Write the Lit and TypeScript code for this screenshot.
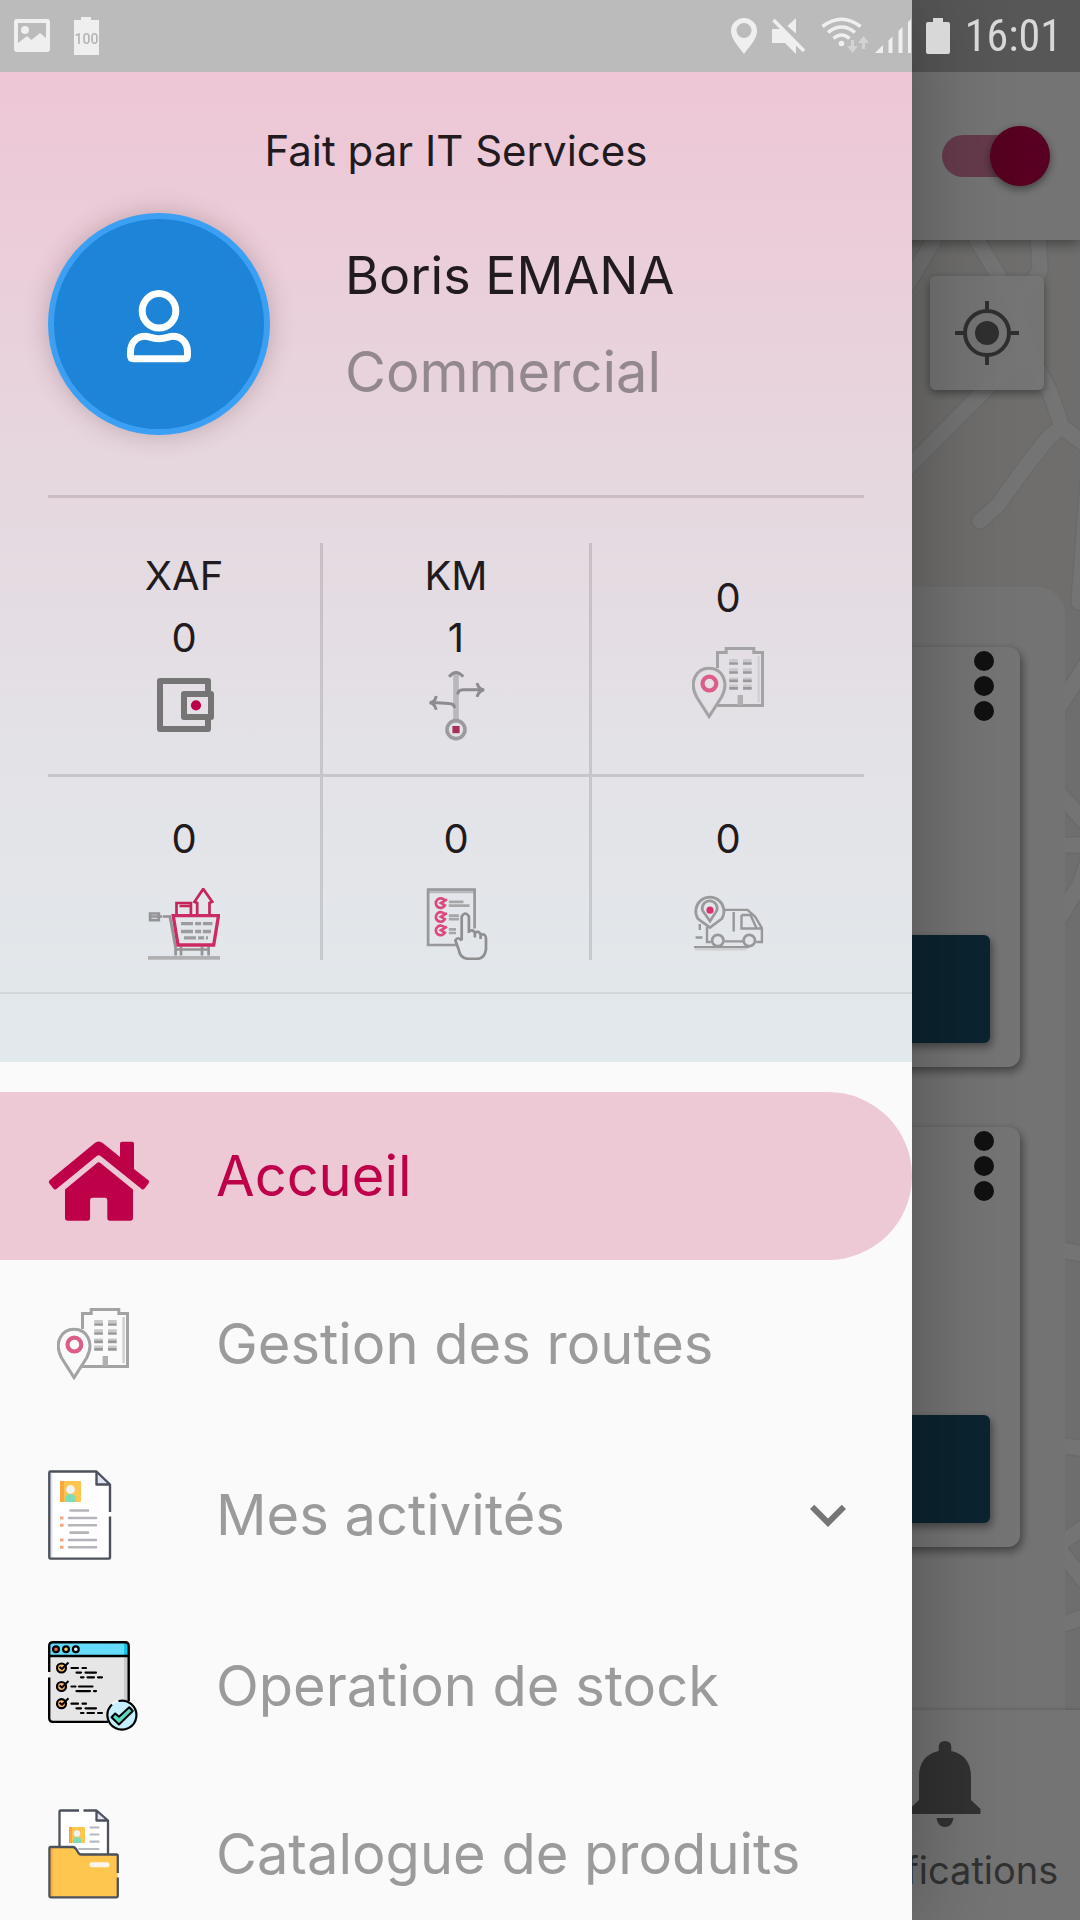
import { LitElement, css, html, svg, nothing, type TemplateResult } from "lit";
import { customElement, state } from "lit/decorators.js";
import { classMap } from "lit/directives/class-map.js";

const GREY = "#a3a3a5";
const PINK = "#d6336c";

const homeIcon = html`<svg width="102" height="90" viewBox="0 0 102 90" fill="#bd0048" aria-hidden="true">
  <path d="M1.6 49.2 46.5 12.2Q50.7 9 55 12.2L72 26V12.7Q72 10.7 74 10.7H84Q86 10.7 86 12.7V38L100.4 49.2Q101.8 50.7 100.6 52.2L96.6 57.6Q95.2 59.2 93.6 58L52.6 25Q50.7 23.6 48.8 25L8.4 58Q6.8 59.2 5.4 57.6L1.2 52.2Q.2 50.7 1.6 49.2Z"/>
  <path d="M17 58.4 49 32Q50.7 30.6 52.4 32L85 58.4V87Q85 89.7 82.3 89.7H62Q59.3 89.7 59.3 87V69Q59.3 66.7 57 66.7H44.4Q42.1 66.7 42.1 69V87Q42.1 89.7 39.4 89.7H19.7Q17 89.7 17 87Z"/>
</svg>`;

const placeIcon = html`<svg width="72" height="72" viewBox="0 0 24 24" fill="none" aria-hidden="true">
  <path d="M8.5 7V1.8H11.4V.5H20.6V1.8H23.5V19.5H8.4" stroke="${GREY}"/>
  <path d="M22.2 3V18.4" stroke="#cfcfd1" stroke-width=".8"/>
  <path d="M12.4 4.5h2.9M17 4.5h2.9M12.4 7.6h2.9M17 7.6h2.9M12.4 10.7h2.9M17 10.7h2.9M12.4 13h2.9M17 13h2.9" stroke="#c9c9cb"/>
  <path d="M12.4 5.5h2.9M17 5.5h2.9M12.4 8.5h2.9M17 8.5h2.9M12.4 11.3h2.9M17 11.3h2.9M12.4 13.8h2.9M17 13.8h2.9" stroke="#98989a" stroke-width=".9"/>
  <path d="M16.1 16v3.4" stroke="#b0b0b2" stroke-width="1.8"/>
  <path d="M5.7 23.2 1.5 16.6C-1.200 11.400 1.600 7.100 5.700 7.100S12.600 11.400 9.900 16.600Z" stroke="${GREY}"/>
  <circle cx="5.800" cy="12.200" r="2.300" stroke="#dc5c8a" stroke-width="1.400"/>
</svg>`;

const walletIcon = html`<svg width="72" height="72" viewBox="0 0 24 24" fill="none" aria-hidden="true">
  <path d="M20 8V4H4V20H20V16" stroke="#757575" stroke-width="2" stroke-linejoin="round"/>
  <path d="M12 8.300H21V16H12Z" stroke="#757575" stroke-width="2" stroke-linejoin="round"/>
  <circle cx="16" cy="12.100" r="1.700" fill="#bd0048"/>
</svg>`;

const routeIcon = html`<svg width="72" height="72" viewBox="0 0 24 24" fill="none" aria-hidden="true">
  <path d="M12 1V17.200" stroke="#b9b7bc" stroke-width="1.900"/>
  <path d="M9.700 2.600Q12-.2 14.400 2.600M12.600 8.500Q12.600 6.900 14.400 6.900H20.400M19 4.700Q19.600 6.900 21.400 6.900Q19.600 7.200 19 9.300M11.500 13Q11.500 11.500 9.600 11.500L4.400 11.200M5.400 9Q5 11.200 3.200 11.200Q5 11.600 5.400 13.600" stroke="#8c8b8f"/>
  <circle cx="12" cy="20.200" r="3" stroke="#9b9a9e" stroke-width="1.200"/>
  <rect x="10.800" y="19" width="2.400" height="2.400" fill="#a83058"/>
</svg>`;

const cartIcon = html`<svg width="72" height="72" viewBox="0 0 24 24" fill="none" aria-hidden="true">
  <path d="M.5 9.500H4.800M.7 8.500H3.600V10.700H.7ZM5 9.500H7.300L9.200 20V22.500M11 19.500V22.500M18 19.500V22.500M20.200 19.500V22.500M9.500 20.500H20" stroke="#949496" stroke-width=".9"/>
  <path d="M0 23.300H24" stroke="#b0b0b2" stroke-width="1.300"/>
  <path d="M9.500 9V5H14.300V9M10.500 6H14M16.400 9V5L15.500 4.600 18.400.3 21.400 4.600 20.500 5V9" stroke="#c7245c" stroke-width=".9"/>
  <path d="M8.400 9.200H23.500L21.900 19H10Z" stroke="#cc2a62" stroke-width="1.100"/>
  <path d="M11 11.900H21.500M11 14.500H21M12 16.600H20" stroke="#9c9c9e" stroke-width="1.100" stroke-dasharray="4 .7 2 .6"/>
</svg>`;

const orderIcon = html`<svg width="72" height="72" viewBox="0 0 24 24" fill="none" aria-hidden="true">
  <path d="M3 1H18" stroke="#b9b9bc" stroke-width="1.500"/>
  <path d="M18.200 13.500V.5H2.700V19H12" stroke="#98989a" stroke-width=".9"/>
  <path d="M8.300 4.300A1.600 1.600 0 1 0 8.300 5.800L7 5 9 3.800M8.300 8.900A1.600 1.600 0 1 0 8.300 10.400L7 9.600 9 8.400M8.300 13.400A1.600 1.600 0 1 0 8.300 14.900L7 14.100 9 12.900" stroke="#da4a7d" stroke-width=".9"/>
  <path d="M9.600 4.600H14.500M9.600 5.900H16.500M9.600 9.200H13M9.600 10.400H13M9.600 13.800H12M9.600 15H12" stroke="#a6a6a8" stroke-width=".9"/>
  <path d="M13.900 17.500V9.500Q15.100 7.500 16.300 9.500V15M16.300 14.500Q17.500 13.500 18.300 15V16.500M18.300 15Q19.600 14 20.200 15.500V17M20.200 15.600Q22 15 22 17V20.500Q21.500 23.600 19 23.600H16Q13.300 23.400 12.900 20.500L11.800 17.500Q12.600 16 13.900 17.500" stroke="#8f8f91" stroke-width=".9"/>
</svg>`;

const truckIcon = html`<svg width="72" height="72" viewBox="0 0 24 24" fill="none" aria-hidden="true">
  <path d="M6 13.200 2 10.300A4.700 4.700 0 1 1 9.900 10.300ZM3.500 7.500A2.500 2.500 0 1 1 8.300 7.500L6 11Z" stroke="#9a9a9c" stroke-width=".9"/>
  <circle cx="6" cy="7.400" r="1.200" fill="${PINK}"/>
  <path d="M10.800 7.300H18.500L21 9.500 23.300 13.400V18H21.400M17 17.800H10.900M6.300 18H5V13M16.500 9V13.500H23M16.500 9H19.500L21.500 13.400M13.900 8V14.500M2.600 12V14M1.200 16.500H3.500M.7 19.700H19" stroke="#98989a" stroke-width=".8"/>
  <path d="M1 20.500H18" stroke="#d0d0d3" stroke-width=".7"/>
  <circle cx="8.600" cy="17.500" r="1.900" stroke="#98989a" stroke-width=".9"/>
  <circle cx="19.100" cy="17.500" r="1.900" stroke="#98989a" stroke-width=".9"/>
</svg>`;

const documentIcon = html`<svg width="64" height="90" viewBox="0 0 64 90" fill="none" aria-hidden="true">
  <path d="M1.500 1.500H48.500L62 14.500V88.500H1.500Z" fill="#fff"/>
  <path d="M3.500 3V87" stroke="#dfe3f0" stroke-width="2"/>
  <path d="M48.500 1.500V14.500H62Z" fill="#dfe3f3"/>
  <path d="M62 42V14.500L48.500 1.500H2.500Q1.300 1.500 1.300 2.700V87.300Q1.300 88.600 2.500 88.600H61Q62 88.600 62 87.500V46.500M48.500 2V14.500H61.500" stroke="#4d515b" stroke-width="2.400" stroke-linejoin="round"/>
  <rect x="12" y="11" width="21" height="21" rx="1" fill="#fec64f"/>
  <path d="M12 11H16V32H12Z" fill="#f9a63c"/>
  <circle cx="22.500" cy="19.500" r="4.400" fill="#f1f4f3"/>
  <path d="M17 32V28Q18 24 22.500 24T28 28V32Z" fill="#7fdcbb"/>
  <path d="M22.500 40.500H40M21 48H48M21 55.300H48M22.500 62.600H40M21 70H48M21 77.300H48" stroke="#b3b5ba" stroke-width="2.600" stroke-linecap="round"/>
  <path d="M12 48H15.500M12 55.300H15.500M12 70H15.500M12 77.300H15.500" stroke="#f3a87c" stroke-width="3"/>
</svg>`;

const checklistRow = (y: number, long: boolean) => svg`
  <circle cx="13.500" cy="${y}" r="4.500" fill="#f5b56a" stroke="#000" stroke-width="2.200"/>
  <path d="M11.500 ${y - 1} 14 ${y + 1} 20.500 ${y - 5.5}" stroke="#000" stroke-width="2"/>
  <path d="${
    long
      ? `M23.500 ${y}H30M34.500 ${y}H38M28.500 ${y + 4.6}H33M37.500 ${y + 4.6}H48M33 ${y + 9.3}H35.500M39.500 ${y + 9.3}H46M50 ${y + 9.3}H54`
      : `M23.500 ${y}H27.500M31 ${y}H44.500M28.500 ${y + 4.6}H42M46 ${y + 4.6}H48`
  }" stroke="#000" stroke-width="2.200" stroke-linecap="round"/>`;

const stockIcon = html`<svg width="90" height="90" viewBox="0 0 90 90" fill="none" aria-hidden="true">
  <rect x="1.200" y="1.200" width="79.500" height="80" rx="4" fill="#e6e6e6"/>
  <path d="M76 15H80.700V70H76Z" fill="#cbcbcb"/>
  <path d="M1.200 15V5Q1.200 1.200 5 1.200H77Q80.700 1.200 80.700 5V15Z" fill="#66dcfc"/>
  <path d="M76 1.200H77Q80.700 1.200 80.700 5V15H76Z" fill="#0fc9ea"/>
  <path d="M1.200 31V5Q1.200 1.200 5 1.200H77Q80.700 1.200 80.700 5V60M1.200 36.500V77Q1.200 80.900 5 80.900H60M1.200 15H80.700" stroke="#000" stroke-width="2.400"/>
  <g stroke="#000" stroke-width="2.200"><circle cx="8" cy="8.200" r="2.900" fill="#f5655c"/><circle cx="18" cy="8.200" r="2.900" fill="#f8cf5a"/><circle cx="27.800" cy="8.200" r="2.900" fill="#e8f7fc"/></g>
  ${checklistRow(27, true)}${checklistRow(45.5, false)}${checklistRow(62.7, true)}
  <circle cx="74" cy="74" r="15.500" fill="#fafafa"/>
  <circle cx="74" cy="74" r="14" fill="#c6effd"/>
  <path d="M64 63.500A14.500 14.500 0 1 0 70.500 60" stroke="#000" stroke-width="2.200"/>
  <path d="M63.500 76.200 67.200 72.500 71 75.700 81.300 66.200 84.800 70 71 83.500Z" fill="#5adcc2" stroke="#000" stroke-width="2" stroke-linejoin="round"/>
</svg>`;

const folderIcon = html`<svg width="72" height="90" viewBox="0 0 72 90" fill="none" aria-hidden="true">
  <path d="M11.500 1.500H48.500L60 11.500V48H11.500Z" fill="#fff"/>
  <path d="M48.500 1.500V11.500H60Z" fill="#dfe3f3"/>
  <path d="M31 1.500H12.500Q11.500 1.500 11.500 2.500V38M35.500 1.500H48.500L60 11.500V46M48.500 2V11.500H59.500" stroke="#4d515b" stroke-width="2.300" stroke-linejoin="round"/>
  <rect x="21" y="18" width="16" height="16" rx="1" fill="#fec64f"/>
  <path d="M21 18H24V34H21Z" fill="#f9a63c"/>
  <circle cx="29" cy="24.500" r="3.200" fill="#eef2f2"/>
  <path d="M25 34V31Q26 28 29 28T33.500 31V34Z" fill="#7fdcbb"/>
  <path d="M42.500 18.500H50.500M42.500 25.500H50.500M42.500 32.700H50.500M31 40H50.500" stroke="#b6b8c2" stroke-width="2.200" stroke-linecap="round"/>
  <path d="M1.400 38H25Q27 38 28.500 40.500L32 45.500H69.800V88.300H1.400Z" fill="#fec64f"/>
  <path d="M1.400 38H5V88.300H1.400Z" fill="#f9ad44"/>
  <path d="M69.800 64V47Q69.800 45.500 68.500 45.500H33Q31.500 45.500 30.500 44L28 40Q26.500 38 25 38H2.700Q1.400 38 1.400 39.300V87Q1.400 88.300 2.700 88.300H68.500Q69.800 88.300 69.800 87V68.500" stroke="#4d515b" stroke-width="2.300"/>
  <path d="M44 55.700H59" stroke="#fbf5ec" stroke-width="5" stroke-linecap="round"/>
</svg>`;

const chevronIcon = html`<svg class="chevron" width="72" height="72" viewBox="0 0 24 24" aria-hidden="true">
  <path d="M16.590 8.590 12 13.170 7.410 8.590 6 10 12 16 18 10Z" fill="#757575"/>
</svg>`;

const userIcon = html`<svg width="64" height="80" viewBox="0 -6 64 80" fill="none" stroke="#fff" stroke-width="7" aria-hidden="true">
  <ellipse cx="32" cy="20.800" rx="16.800" ry="17.300"/>
  <path d="M18.500 46.300C9.500 46.300 3.500 52.500 3.500 62V65.500Q3.500 68.800 6.500 68.800H57.500Q60.500 68.800 60.500 65.500V62C60.500 52.500 54.500 46.300 45.500 46.300 42 46.300 39.500 48.700 32 48.700S22 46.300 18.500 46.300Z"/>
</svg>`;

const targetIcon = html`<svg width="64" height="64" viewBox="0 0 64 64" fill="none" stroke="#686868" stroke-width="4" aria-hidden="true">
  <circle cx="32" cy="32" r="22"/>
  <path d="M32 0V9M32 55V64M0 32H9M55 32H64"/>
  <circle cx="32" cy="32" r="12" fill="#686868" stroke="none"/>
</svg>`;

const bellIcon = html`<svg width="72" height="86" viewBox="0 0 72 86" fill="#6d6d6d" aria-hidden="true">
  <path d="M29.700 10V6Q29.700 0 36 0T42.300 6V10C55 12.500 62 22 62 35V59L71.500 68V73H.5V68L10 59V35C10 22 17 12.500 29.700 10Z"/>
  <path d="M27.500 77H44.500Q43 86 36 86T27.500 77Z"/>
</svg>`;

const mapRoads = html`<svg class="roads" width="180" height="1470" viewBox="900 240 180 1470" fill="none" aria-hidden="true">
  <defs>
    <g id="lines">
      <path d="M934 240 904 290M977 240 1013 300 1028 350 1050 392 1062 427 1095 452M1038 230 1040 271 1016 303M1026 348 975 400 900 476M1062 427 1049 437 1026 466 998 505 980 521" />
      <path d="M1088 480 1079 602M1056 712 1092 655M1056 790 1092 830M1056 845H1092M1052 930 1080 884 1092 850"/>
      <path d="M1052 1248 1092 1256M1052 1444 1092 1450M1092 1522 1056 1546 1092 1590M1052 1628 1092 1614"/>
    </g>
  </defs>
  <use href="#lines" stroke="#e6e6e4" stroke-width="18" stroke-linejoin="round" stroke-linecap="round"/>
  <use href="#lines" stroke="#fcfcfc" stroke-width="15" stroke-linejoin="round" stroke-linecap="round"/>
</svg>`;

interface Stat {
  label?: string;
  value: number;
  icon: TemplateResult;
}

interface MenuEntry {
  label: string;
  icon: TemplateResult;
  offset?: boolean;
  expandable?: boolean;
}

const STATS: Stat[][] = [
  [
    { label: "XAF", value: 0, icon: walletIcon },
    { label: "KM", value: 1, icon: routeIcon },
    { value: 0, icon: placeIcon },
  ],
  [
    { value: 0, icon: cartIcon },
    { value: 0, icon: orderIcon },
    { value: 0, icon: truckIcon },
  ],
];

const MENU: MenuEntry[] = [
  { label: "Accueil", icon: homeIcon },
  { label: "Gestion des routes", icon: placeIcon, offset: true },
  { label: "Mes activités", icon: documentIcon, expandable: true },
  { label: "Operation de stock", icon: stockIcon },
  { label: "Catalogue de produits", icon: folderIcon },
];

@customElement("status-bar")
export class StatusBar extends LitElement {
  static styles = css`
    :host {
      display: flex;
      align-items: center;
      justify-content: space-between;
      height: 72px;
      box-sizing: border-box;
      padding: 0 18px 0 14px;
      background: rgba(0, 0, 0, 0.25);
    }
    .group {
      display: flex;
      align-items: center;
      gap: 24px;
    }
    .group.system {
      gap: 15px;
    }
    .badge-text {
      font: 500 14px Roboto, "Liberation Sans", sans-serif;
    }
    .clock {
      font: 400 44px/72px "Roboto Condensed", "Liberation Sans Narrow", Roboto, sans-serif;
      color: #d8d8d8;
    }
  `;

  render() {
    return html`
      <div class="group">
        <svg width="36" height="36" viewBox="0 0 36 36" aria-hidden="true">
          <path fill="#efefef" fill-rule="evenodd" d="M3 1H33Q36 1 36 4V31Q36 34 33 34H3Q0 34 0 31V4Q0 1 3 1ZM4 5V25L13 18 17.500 22 26 15 32 20V5Z"/>
          <circle cx="11" cy="12" r="4" fill="#efefef"/>
        </svg>
        <svg width="26" height="38" viewBox="0 0 26 38" aria-hidden="true">
          <path fill="#efefef" d="M7 0H17V3H25V38H0V3H7Z"/>
          <text class="badge-text" x="12.500" y="27" text-anchor="middle" fill="#b4b4b4">100</text>
        </svg>
      </div>
      <div class="group system">
        <svg width="26" height="36" viewBox="0 0 26 36" fill="#efefef" aria-hidden="true">
          <path fill-rule="evenodd" d="M13 0A13 13 0 0 1 26 13C26 21 18 29 13 36 8 29 0 21 0 13A13 13 0 0 1 13 0ZM13 5A7.500 7.500 0 1 0 13 20 7.500 7.500 0 1 0 13 5Z"/>
        </svg>
        <svg width="34" height="36" viewBox="0 0 34 36" fill="#efefef" aria-hidden="true">
          <path d="M24 0V15.500L15.500 8ZM0 11H9L24 26V36L13 25H0Z"/>
          <path d="M1.500 2 32 33" stroke="#efefef" stroke-width="3.500"/>
        </svg>
        <svg width="90" height="38" viewBox="0 0 90 38" fill="none" aria-hidden="true">
          <g stroke="#efefef" stroke-width="3.500">
            <path d="M1.500 9.500Q20.500-5 39.500 9.500M7 15.500Q20.500 4.500 34 15.500M12.500 21.500Q20.500 14.500 28.500 21.500"/>
          </g>
          <circle cx="20.500" cy="26.500" r="2.800" fill="#efefef"/>
          <path d="M30 23H33V29H37L31.500 36 26 29H30ZM41 32H44V26H48L42.500 19 37 26H41Z" fill="#d3d3d3"/>
          <path d="M54 36 62 28V36ZM67.500 23.500 71.500 19.500V36H67.500ZM77.500 14 81.500 10V36H77.500ZM87 5 90 2V36H87Z" fill="#efefef"/>
        </svg>
        <svg width="24" height="36" viewBox="0 0 24 36" fill="#d8d8d8" aria-hidden="true">
          <path d="M7 0H17V4H22Q24 4 24 6V34Q24 36 22 36H2Q0 36 0 34V6Q0 4 2 4H7Z"/>
        </svg>
        <time class="clock">16:01</time>
      </div>
    `;
  }
}

@customElement("map-page")
export class MapPage extends LitElement {
  static styles = css`
    :host {
      display: flex;
      flex-direction: column;
      height: 100%;
      isolation: isolate;
      background: #f1f0ed;
      font-family: Inter, "Open Sans", sans-serif;
    }
    button {
      font: inherit;
      border: 0;
      padding: 0;
      margin: 0;
    }
    .appbar {
      display: flex;
      justify-content: flex-end;
      align-items: center;
      min-height: 168px;
      padding: 72px 30px 0 0;
      background: #fdfdfd;
      box-shadow: 0 4px 12px rgba(0, 0, 0, 0.4);
      z-index: 1;
    }
    .switch {
      appearance: none;
      display: flex;
      align-items: center;
      justify-content: flex-end;
      width: 108px;
      height: 42px;
      margin: 0;
      border-radius: 21px;
      background: linear-gradient(90deg, #de80a4 90%, transparent 90%);
    }
    .switch::before {
      content: "";
      width: 60px;
      height: 60px;
      flex: none;
      border-radius: 50%;
      background: #bd0048;
      box-shadow: 0 3px 8px rgba(0, 0, 0, 0.45);
    }
    .map {
      position: relative;
      flex: 1;
      min-height: 0;
      display: flex;
      overflow: hidden;
    }
    .roads {
      position: absolute;
      top: 0;
      right: 0;
    }
    .locate {
      position: absolute;
      top: 36px;
      right: 36px;
      display: grid;
      place-items: center;
      width: 114px;
      height: 114px;
      border-radius: 6px;
      background: rgba(255, 255, 255, 0.85);
      box-shadow: 0 3px 8px rgba(0, 0, 0, 0.4);
    }
    .sheet {
      position: relative;
      flex: 1;
      display: flex;
      flex-direction: column;
      gap: 60px;
      margin: 347px 15px 0 0;
      padding: 60px 45px 0 0;
      border-radius: 0 28px 0 0;
      background: #fbfbfb;
    }
    .card {
      display: flex;
      flex-direction: column;
      align-items: flex-end;
      justify-content: space-between;
      box-sizing: border-box;
      min-height: 420px;
      padding: 4px 30px 24px 0;
      border-radius: 12px;
      background: #fdfdfd;
      box-shadow: 2px 4px 10px rgba(0, 0, 0, 0.45);
    }
    .more {
      display: flex;
      flex-direction: column;
      align-items: flex-end;
      gap: 5px;
      width: 48px;
      margin-right: -4px;
      background: none;
    }
    .dot {
      width: 20px;
      height: 20px;
      border-radius: 50%;
      background: #252525;
    }
    .action {
      width: 100%;
      height: 108px;
      border-radius: 6px;
      background: #185069;
      box-shadow: 2px 4px 8px rgba(0, 0, 0, 0.4);
    }
    .tabs {
      display: grid;
      grid-template-columns: repeat(4, 1fr);
      background: #fdfdfd;
      box-shadow: 0 -1px 4px rgba(0, 0, 0, 0.16);
      z-index: 1;
    }
    .tab {
      grid-column: 4;
      display: flex;
      flex-direction: column;
      align-items: center;
      gap: 18px;
      padding: 31px 0 25px;
      color: #6d6d6d;
      font-size: 38px;
      line-height: 50px;
      text-decoration: none;
    }
  `;

  private card() {
    return html`<article class="card">
      <button class="more" aria-label="Options">
        <span class="dot"></span><span class="dot"></span><span class="dot"></span>
      </button>
      <button class="action" aria-label="Ouvrir"></button>
    </article>`;
  }

  render() {
    return html`
      <header class="appbar"><input class="switch" type="checkbox" role="switch" aria-label="En ligne" checked /></header>
      <main class="map">
        ${mapRoads}
        <button class="locate" aria-label="Ma position">${targetIcon}</button>
        <section class="sheet">${this.card()}${this.card()}</section>
      </main>
      <nav class="tabs"><a class="tab" href="#notifications">${bellIcon}<span>Notifications</span></a></nav>
    `;
  }
}

@customElement("side-drawer")
export class SideDrawer extends LitElement {
  @state() private current = 0;
  @state() private expanded = false;

  static styles = css`
    :host {
      display: block;
      overflow-y: auto;
      scrollbar-width: none;
      background: #fafafa;
      color: #211a1e;
      font-family: Inter, "Open Sans", sans-serif;
      box-shadow: 0 0 90px rgba(0, 0, 0, 0.32);
    }
    svg {
      display: block;
      flex: none;
    }
    .header {
      margin-top: 72px;
      padding-top: 48px;
      background: linear-gradient(#eec6d5, #e5d9e0 45%, #e3e2e7 68%, #e2e9ec);
    }
    .credit {
      margin: 0 0 31px;
      text-align: center;
      font-size: 42px;
      font-weight: 400;
      line-height: 62px;
    }
    .profile {
      display: flex;
      align-items: center;
      gap: 75px;
      margin: 0 48px;
      padding-bottom: 60px;
      border-bottom: 3px solid rgba(30, 0, 25, 0.13);
    }
    .avatar {
      display: grid;
      place-items: center;
      box-sizing: border-box;
      width: 222px;
      height: 222px;
      flex: none;
      border: 6px solid #3ba0f4;
      border-radius: 50%;
      background: #1d84d7;
      box-shadow: 0 0 24px rgba(90, 60, 60, 0.3);
    }
    .line {
      margin: 0;
      font-size: 52px;
      font-weight: 400;
      line-height: 96px;
    }
    .role {
      color: #938790;
      font-size: 56px;
    }
    .stats {
      margin: 45px 48px 32px;
    }
    .row {
      display: grid;
      grid-template-columns: 1fr 1fr 1fr;
    }
    .row + .row {
      border-top: 3px solid rgba(20, 10, 25, 0.13);
    }
    .stat {
      display: flex;
      flex-direction: column;
      align-items: center;
      justify-content: center;
      gap: 18px;
      padding-bottom: 32px;
      font-size: 40px;
      line-height: 62px;
    }
    .stat:nth-child(2) {
      border: solid rgba(20, 10, 25, 0.13);
      border-width: 0 3px;
    }
    .row:first-child .stat {
      min-height: 199px;
    }
    .row + .row .stat {
      padding: 31px 0 0;
    }
    .stat.labelled {
      gap: 0;
    }
    .figures {
      display: flex;
      flex-direction: column;
      align-items: center;
    }
    .footer {
      height: 68px;
      border-top: 2px solid rgba(0, 0, 0, 0.07);
    }
    .menu {
      padding-top: 30px;
    }
    .entry {
      display: flex;
      align-items: center;
      box-sizing: border-box;
      width: 100%;
      height: 168px;
      margin: 0;
      padding: 0 48px;
      border: 0;
      background: none;
      color: #9b9b9b;
      font: 400 56px Inter, "Open Sans", sans-serif;
      text-align: left;
      text-decoration: none;
      white-space: nowrap;
    }
    .entry.current {
      border-radius: 0 84px 84px 0;
      background: #edc9d6;
      color: #bd0048;
    }
    .entry.expandable {
      margin: 3px 0;
    }
    .slot {
      width: 168px;
      flex: none;
    }
    .slot.offset {
      box-sizing: border-box;
      padding-left: 9px;
    }
    .label {
      flex: 1;
    }
  `;

  private stat(item: Stat) {
    return html`<div class=${classMap({ stat: true, labelled: !!item.label })}>
      <div class="figures">
        ${item.label ? html`<span>${item.label}</span>` : nothing}
        <span>${item.value}</span>
      </div>
      ${item.icon}
    </div>`;
  }

  private entry(item: MenuEntry, index: number) {
    const body = html`<span class=${classMap({ slot: true, offset: !!item.offset })}>${item.icon}</span>
      <span class="label">${item.label}</span>`;
    if (item.expandable) {
      return html`<button
        class="entry expandable"
        aria-expanded=${this.expanded}
        @click=${() => (this.expanded = !this.expanded)}
      >${body}${chevronIcon}</button>`;
    }
    return html`<a
      class=${classMap({ entry: true, current: index === this.current })}
      href="#menu-${index}"
      @click=${() => (this.current = index)}
    >${body}</a>`;
  }

  render() {
    return html`
      <header class="header">
        <p class="credit">Fait par IT Services</p>
        <div class="profile">
          <div class="avatar">${userIcon}</div>
          <div>
            <h1 class="line">Boris EMANA</h1>
            <p class="line role">Commercial</p>
          </div>
        </div>
        <div class="stats">
          ${STATS.map((row) => html`<div class="row">${row.map((s) => this.stat(s))}</div>`)}
        </div>
        <div class="footer"></div>
      </header>
      <nav class="menu">${MENU.map((m, i) => this.entry(m, i))}</nav>
    `;
  }
}

@customElement("app-root")
export class AppRoot extends LitElement {
  static styles = css`
    :host {
      display: block;
      position: relative;
      height: 100vh;
      overflow: hidden;
    }
    .scrim {
      position: absolute;
      inset: 0;
      background: rgba(0, 0, 0, 0.54);
    }
    .drawer {
      position: absolute;
      inset: 0 168px 0 0;
    }
    .status {
      position: absolute;
      inset: 0 0 auto;
    }
  `;

  render() {
    return html`
      <map-page></map-page>
      <div class="scrim"></div>
      <side-drawer class="drawer"></side-drawer>
      <status-bar class="status"></status-bar>
    `;
  }
}
